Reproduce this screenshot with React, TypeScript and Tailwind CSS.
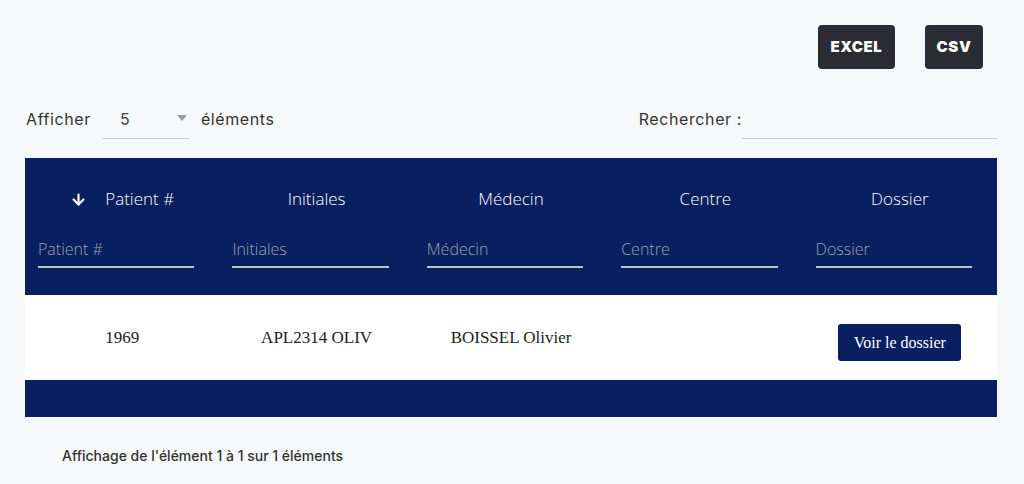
import { ArrowDown } from "lucide-react"

const columns = ["Patient #", "Initiales", "Médecin", "Centre", "Dossier"]

const sans = "font-['Inter','Liberation_Sans',sans-serif]"

export default function App() {
  return (
    <div className={`min-h-[484px] bg-[#f7f8fa] pl-[25px] pr-[27px] pt-[25px] ${sans}`}>
      {/* export buttons */}
      <div className="flex justify-end gap-[30px] pr-[14px]">
        <button className="h-[44px] w-[77px] rounded-[4px] bg-[#2a2b33] text-[15px] font-black tracking-[0.6px] text-white">
          EXCEL
        </button>
        <button className="h-[44px] w-[58px] rounded-[4px] bg-[#2a2b33] text-[15px] font-black tracking-[0.6px] text-white">
          CSV
        </button>
      </div>

      {/* length + search */}
      <div className="mt-[30px] flex h-[40px] items-center justify-between text-[16px] tracking-[0.6px] text-[#333]">
        <div className="flex items-center">
          <span className="pl-px">Afficher</span>
          <div className="ml-[12px] flex h-[40px] w-[86px] items-center justify-between border-b border-[#c9c9cc] pl-[17px] pr-[2px]">
            <span className="text-[#444]">5</span>
            <svg width="10" height="6" viewBox="0 0 10 6" className="mb-[2px]">
              <path d="M0 0h10L5 6z" fill="#9a9a9a" />
            </svg>
          </div>
          <span className="ml-[12px]">éléments</span>
        </div>
        <div className="flex items-center">
          <span>Rechercher :</span>
          <div className="h-[40px] w-[255px] border-b border-[#c9c9cc]" />
        </div>
      </div>

      {/* table */}
      <div className="mt-[19px]">
        <div className="grid grid-cols-5 bg-[#0a1f5f] pb-[27px] pt-[30px] font-['Open_Sans',sans-serif] text-white">
          {columns.map((c, i) => (
            <div key={c} className="flex flex-col">
              <div className="flex h-[22px] items-center justify-center text-[17px] font-light">
                {i === 0 && <ArrowDown size={17} strokeWidth={3} className="mr-[18px]" />}
                {c}
              </div>
              <div className="mt-[21px] pl-[13px] pr-[25px]">
                <div className="flex h-[37px] items-center border-b-[2px] border-[#bcc0cc] pt-[1px] text-[16px] font-light text-[#9aa0b2]">
                  {c}
                </div>
              </div>
            </div>
          ))}
        </div>

        <div className="grid h-[85px] grid-cols-5 bg-white font-['Liberation_Serif',serif] text-[#222]">
          <div className="self-center text-center text-[17px]">1969</div>
          <div className="self-center text-center text-[17px]">APL2314 OLIV</div>
          <div className="self-center text-center text-[17px]">BOISSEL Olivier</div>
          <div />
          <div className="flex justify-center pt-[29px]">
            <button className="h-[37px] w-[123px] rounded-[3px] bg-[#0a1f5f] text-[16px] text-white">
              Voir le dossier
            </button>
          </div>
        </div>

        <div className="h-[37px] bg-[#0a1f5f]" />
      </div>

      <div className="mt-[28px] pl-[37px] text-[14px] font-medium text-[#333]">
        Affichage de l'élément 1 à 1 sur 1 éléments
      </div>
    </div>
  )
}
